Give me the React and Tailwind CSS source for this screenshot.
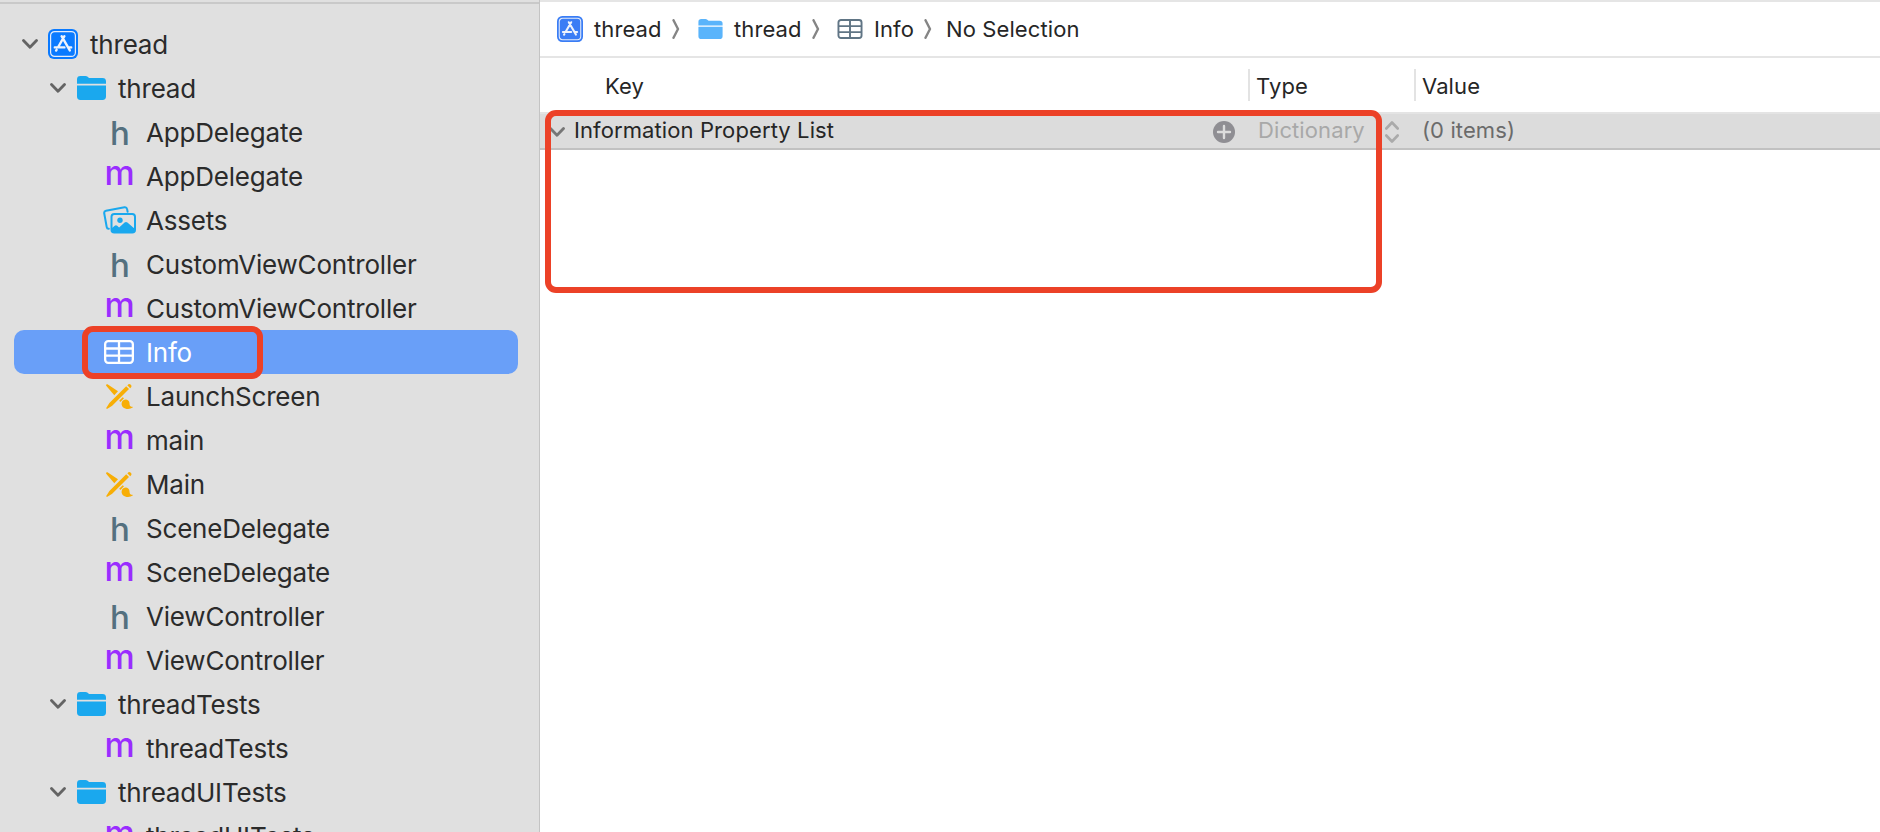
import clsx from 'clsx'

const FILES = [
  { name: 'thread', kind: 'project', depth: 0 },
  { name: 'thread', kind: 'folder', depth: 1 },
  { name: 'AppDelegate', kind: 'header', depth: 2 },
  { name: 'AppDelegate', kind: 'impl', depth: 2 },
  { name: 'Assets', kind: 'assets', depth: 2 },
  { name: 'CustomViewController', kind: 'header', depth: 2 },
  { name: 'CustomViewController', kind: 'impl', depth: 2 },
  { name: 'Info', kind: 'plist', depth: 2, selected: true },
  { name: 'LaunchScreen', kind: 'storyboard', depth: 2 },
  { name: 'main', kind: 'impl', depth: 2 },
  { name: 'Main', kind: 'storyboard', depth: 2 },
  { name: 'SceneDelegate', kind: 'header', depth: 2 },
  { name: 'SceneDelegate', kind: 'impl', depth: 2 },
  { name: 'ViewController', kind: 'header', depth: 2 },
  { name: 'ViewController', kind: 'impl', depth: 2 },
  { name: 'threadTests', kind: 'folder', depth: 1 },
  { name: 'threadTests', kind: 'impl', depth: 2 },
  { name: 'threadUITests', kind: 'folder', depth: 1 },
  { name: 'threadUITests', kind: 'impl', depth: 2 },
]

const INDENT = ['pl-2', 'pl-9', 'pl-16']

function Chevron({ className }) {
  return (
    <svg className={className} viewBox="0 0 16 10" fill="none" stroke="currentColor" strokeWidth="2.8" strokeLinecap="round" strokeLinejoin="round">
      <path d="M1.500 1.500 8 8.200l6.500-6.700" />
    </svg>
  )
}

function ProjectIcon({ className }) {
  return (
    <svg className={className} viewBox="0 0 30 30" fill="none">
      <rect width="30" height="30" rx="6" fill="currentColor" />
      <rect x="2.6" y="2.6" width="24.8" height="24.8" rx="4" stroke="#e4ecfa" strokeWidth="1.2" />
      <g stroke="#eef3fc" strokeWidth="2.400" strokeLinecap="round">
        <path d="M16.400 7.200 10.200 18M13.600 7.200l8.200 14.200M6.800 18.400h9.600M20.400 18.400h2.800M8.600 20.800l-.5.8" />
      </g>
    </svg>
  )
}

function FolderIcon({ className }) {
  return (
    <svg className={className} viewBox="0 0 29 24" fill="currentColor">
      <path d="M0 7.800V3.400C0 1.200 1.200 0 3.400 0h5c1 0 1.600.200 2.300.8l.7.600c.5.500 1 .7 1.800.7h12.300C27.800 2.100 29 3.300 29 5.400v2.400z" />
      <path d="M0 9.400h29v11.200c0 2.200-1.200 3.400-3.400 3.400H3.400C1.200 24 0 22.800 0 20.600z" />
    </svg>
  )
}

function TableIcon({ className }) {
  return (
    <svg className={className} viewBox="0 0 30 24" fill="none" stroke="currentColor" strokeWidth="2.300">
      <rect x="1.150" y="1.150" width="27.700" height="21.700" rx="3" />
      <path d="M1 8.500h28M1 15.700h28M15 1v22" />
    </svg>
  )
}

function AssetsIcon({ className }) {
  return (
    <svg className={className} viewBox="0 0 33 28" fill="none">
      <path
        d="M5.800 22.700C4.500 22.800 3.900 22.200 3.700 21L1.200 7.300C1 5.800 1.500 5 3 4.700L21.500 1.300c1.500-.2 2.300.3 2.600 1.800l.5 2.700"
        stroke="currentColor"
        strokeWidth="2"
        strokeLinecap="round"
      />
      <rect x="8.500" y="8" width="23.500" height="18.500" rx="2.800" stroke="currentColor" strokeWidth="2" />
      <circle cx="17" cy="14.300" r="2.700" fill="currentColor" />
      <path d="M8.500 22.500l3.200-2.700c.8-.7 1.700-.7 2.500 0l1.900 1.700 5.500-4.900c.9-.8 1.900-.8 2.800 0l7.600 6.400v1c0 1.600-1 2.500-2.600 2.500H11c-1.600 0-2.500-.9-2.500-2.500z" fill="currentColor" />
    </svg>
  )
}

function StoryboardIcon({ className }) {
  return (
    <svg className={className} viewBox="0 0 27 25" fill="currentColor">
      <path d="M1.500.3 12 7.200 8.300 11.200.2 1.700C-.2.900.7-.2 1.500.3z" />
      <path d="M20.200 2.300 23 5.100 6.200 21.800 1.400 24.700c-.8.400-1.400-.200-1-1L3.400 19z" />
      <path d="M21.300 1.300l1-.8c.7-.600 1.600-.5 2.200.1l.5.5c.6.600.6 1.500.1 2.200l-.9.900z" />
      <path d="M13.200 16.700l3.500-3.500 1.300 1.100-3.600 3.700z" />
      <path d="M15.800 18.400c.9-2.600 4.300-3.700 6.400-1.900 1.600 1.400 1.200 3 1.500 4.500.2 1.100 1 1.700 2.700 1.800.5.100.6.500.2.800-2.400 1.900-7.300 1.900-9.600-.400-1.300-1.300-1.700-3.200-1.200-4.800z" />
    </svg>
  )
}

function FileIcon({ kind }) {
  switch (kind) {
    case 'project':
      return <ProjectIcon className="h-[30px] w-[30px] text-[#0a7aff]" />
    case 'folder':
      return <FolderIcon className="h-6 w-[29px] text-[#1aa8ee]" />
    case 'assets':
      return <AssetsIcon className="h-7 w-[33px] shrink-0 text-[#1aa8ee]" />
    case 'plist':
      return <TableIcon className="h-6 w-[30px] text-white" />
    case 'storyboard':
      return <StoryboardIcon className="h-[25px] w-[27px] text-[#f7ae06]" />
    case 'header':
      return <span className="pt-px pl-[2px] text-[33px] leading-[44px] font-[450] text-[#54707f]">h</span>
    default:
      return <span className="pb-[6px] pl-px text-[34px] leading-[44px] font-[450] text-[#9a2dff]">m</span>
  }
}

function FileRow({ file }) {
  const expandable = file.kind === 'project' || file.kind === 'folder'
  return (
    <li
      className={clsx(
        'flex h-11 shrink-0 items-center rounded-[10px]',
        INDENT[file.depth],
        file.selected ? 'bg-[#699ff8] text-white' : 'text-[#2b2b2b]',
      )}
    >
      <span className="flex w-4 shrink-0">
        {expandable && <Chevron className="h-[10px] w-4 text-[#646464]" />}
      </span>
      <span className="ml-[9px] flex w-[32px] shrink-0 items-center justify-center">
        <FileIcon kind={file.kind} />
      </span>
      <span className="ml-[11px] pt-[2px] text-[26px] leading-[42px] tracking-[-0.2px] whitespace-nowrap">
        {file.name}
      </span>
    </li>
  )
}

function Navigator() {
  return (
    <aside className="flex w-[540px] shrink-0 flex-col overflow-hidden border-r border-[#c4c4c4] bg-[#e0e0e0]">
      <div className="mt-[2px] h-[2px] shrink-0 bg-[#c9c9c9]" />
      <ul className="mt-[18px] ml-[14px] flex w-[504px] flex-col">
        {FILES.map((file, i) => (
          <FileRow key={i} file={file} />
        ))}
      </ul>
    </aside>
  )
}

function CrumbArrow() {
  return (
    <svg className="h-5 w-2 shrink-0 text-[#858585]" viewBox="0 0 8 20" fill="none" stroke="currentColor" strokeWidth="2.400" strokeLinecap="round" strokeLinejoin="round">
      <path d="M1.500 1.200 6 10l-4.500 8.800" />
    </svg>
  )
}

function JumpBar() {
  return (
    <nav className="flex h-[58px] shrink-0 items-center border-t-2 border-b-2 border-[#e5e5e5] pl-[17px]">
      <span className="flex w-[115px] items-center">
        <ProjectIcon className="mr-[11px] h-[26px] w-[26px] text-[#3a7df5]" />
        thread
      </span>
      <span className="flex w-[26px]"><CrumbArrow /></span>
      <span className="flex w-[114px] items-center">
        <FolderIcon className="mr-[11px] h-5 w-[25px] text-[#5ab4fb]" />
        thread
      </span>
      <span className="flex w-[25px]"><CrumbArrow /></span>
      <span className="flex w-[87px] items-center">
        <TableIcon className="mr-[11px] h-5 w-[26px] text-[#607585]" />
        Info
      </span>
      <span className="flex w-[22px]"><CrumbArrow /></span>
      <span className="whitespace-nowrap">No Selection</span>
    </nav>
  )
}

function PropertyTable() {
  return (
    <div className="flex flex-col">
      <div className="flex h-[54px] items-center">
        <div className="w-[708px] pt-[2px] pl-[65px]">Key</div>
        <div className="flex h-8 w-[166px] items-center border-l-2 border-[#e3e3e3] pt-[2px] pl-[6px]">Type</div>
        <div className="flex h-8 items-center border-l-2 border-[#e3e3e3] pt-[2px] pl-[6px]">Value</div>
      </div>
      <div className="flex h-[38px] items-center border-t-2 border-b-2 border-t-[#e4e4e4] border-b-[#c1c1c1] bg-[#dcdcdc]">
        <Chevron className="mt-[2px] ml-[9px] h-[10px] w-4 text-[#767676]" />
        <span className="ml-[9px] w-[639px] pb-[2px] whitespace-nowrap">Information Property List</span>
        <svg className="mt-px h-[22px] w-[22px] shrink-0" viewBox="0 0 22 22">
          <circle cx="11" cy="11" r="11" fill="#8f8e93" />
          <path d="M11 5v12M5 11h12" stroke="#dcdcdc" strokeWidth="2.400" strokeLinecap="round" />
        </svg>
        <span className="ml-[23px] w-[127px] pb-[2px] text-[#a8a8a8]">Dictionary</span>
        <svg className="mt-px h-[22px] w-[14px] shrink-0" viewBox="0 0 14 22" fill="none" stroke="#aaaaaa" strokeWidth="2.600" strokeLinecap="round" strokeLinejoin="round">
          <path d="M1.300 7.500 7 1.500l5.700 6M1.300 14.500l5.700 6 5.700-6" />
        </svg>
        <span className="ml-[23px] pb-[2px] whitespace-nowrap text-[#6b6b6b]">(0 items)</span>
      </div>
    </div>
  )
}

export default function App() {
  return (
    <div className="relative flex h-[832px] w-[1880px] overflow-hidden bg-white font-[Inter,sans-serif]">
      <Navigator />
      <main className="flex min-w-0 flex-1 flex-col text-[22px] tracking-[0.1px] text-[#262626]">
        <JumpBar />
        <PropertyTable />
      </main>

      {/* Red callouts */}
      <div className="absolute top-[326px] left-[82px] h-[53px] w-[181px] rounded-[11px] border-[6px] border-[#ec4127]" />
      <div className="absolute top-[110px] left-[545px] h-[183px] w-[837px] rounded-[11px] border-[6px] border-[#ec4127]" />
    </div>
  )
}
